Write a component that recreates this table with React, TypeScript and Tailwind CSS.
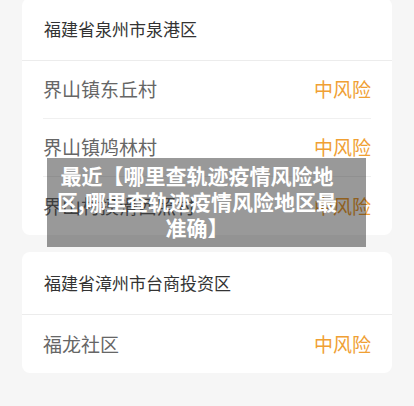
type Area = { title: string; places: string[] };

const areas: Area[] = [
  {
    title: "福建省泉州市泉港区",
    places: ["界山镇东丘村", "界山镇鸠林村", "界山村摸滑西照村"],
  },
  {
    title: "福建省漳州市台商投资区",
    places: ["福龙社区"],
  },
];

function AreaCard({ area }: { area: Area }) {
  return (
    <div className="bg-white rounded-lg">
      <div className="h-[63px] flex items-center px-[22px] border-b border-[#ececec] text-[17px] text-[#333]">
        {area.title}
      </div>
      <div className="px-[21px]">
        {area.places.map((place, i) => (
          <div
            key={place}
            className={
              "h-[58px] flex items-center justify-between text-[19px] " +
              (i < area.places.length - 1 ? "border-b border-[#f0f0f0]" : "")
            }
          >
            <span className="text-[#666]">{place}</span>
            <span className="text-[#f0a033]">中风险</span>
          </div>
        ))}
      </div>
    </div>
  );
}

export default function App() {
  return (
    <div
      className="relative w-[414px] h-[406px] overflow-hidden bg-[#f6f6f6]"
      style={{ fontFamily: '"Noto Sans CJK SC", "Noto Sans", sans-serif' }}
    >
      <div className="-mt-[2px] px-[22px] flex flex-col gap-[17px]">
        {areas.map((area) => (
          <AreaCard key={area.title} area={area} />
        ))}
      </div>

      {/* 标题浮层 */}
      <div className="absolute left-[47px] top-[158px] w-[319px] h-[89px] bg-black/40 pl-[8px] pr-[27px] pt-[4px]">
        <p className="text-white font-bold text-[21px] leading-[26px] text-center">
          最近【哪里查轨迹疫情风险地区,哪里查轨迹疫情风险地区最准确】
        </p>
      </div>
    </div>
  );
}
